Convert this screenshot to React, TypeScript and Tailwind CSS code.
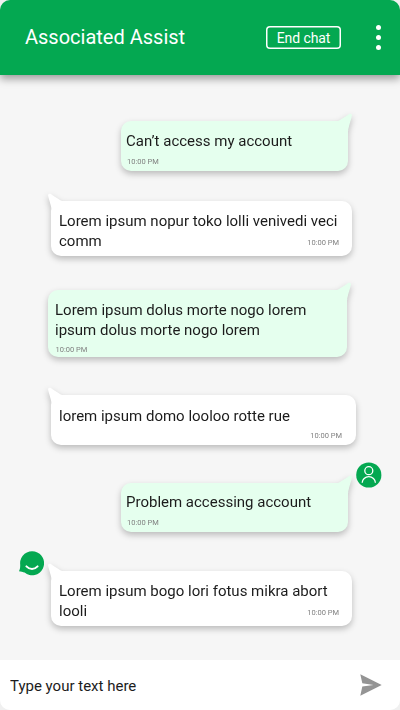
import { useState } from 'react'
import clsx from 'clsx'

type Message = {
    id: number
    from: 'user' | 'agent'
    lines: string[]
    time: string
    box: string
    text: string
    stamp: string
    avatar?: boolean
}

const messages: Message[] = [
    {
        id: 1,
        from: 'user',
        lines: ['Can’t access my account'],
        time: '10:00 PM',
        box: 'mt-[46px] ml-[121px] w-[227px] h-[50px]',
        text: 'pl-[5px] pt-[10px]',
        stamp: 'left-[6px] bottom-[4px]',
    },
    {
        id: 2,
        from: 'agent',
        lines: ['Lorem ipsum nopur toko lolli venivedi veci', 'comm'],
        time: '10:00 PM',
        box: 'mt-[30px] ml-[51px] w-[301px] h-[55px]',
        text: 'pl-2 pt-[10px]',
        stamp: 'right-[13px] bottom-[8px]',
    },
    {
        id: 3,
        from: 'user',
        lines: ['Lorem ipsum dolus morte nogo lorem', 'ipsum dolus morte nogo lorem'],
        time: '10:00 PM',
        box: 'mt-[34px] ml-[48px] w-[299px] h-[67px]',
        text: 'pl-[7px] pt-[10px]',
        stamp: 'left-[7.5px] bottom-[2px]',
    },
    {
        id: 4,
        from: 'agent',
        lines: ['lorem ipsum domo looloo rotte rue'],
        time: '10:00 PM',
        box: 'mt-[38px] ml-[51px] w-[305px] h-[50px]',
        text: 'pl-2 pt-[11px]',
        stamp: 'right-[14px] bottom-[4px]',
    },
    {
        id: 5,
        from: 'user',
        lines: ['Problem accessing account'],
        time: '10:00 PM',
        box: 'mt-[38px] ml-[121px] w-[227px] h-[49px]',
        text: 'pl-[5px] pt-[9px]',
        stamp: 'left-[6px] bottom-[4px]',
        avatar: true,
    },
    {
        id: 6,
        from: 'agent',
        lines: ['Lorem ipsum bogo lori fotus mikra abort', 'looli'],
        time: '10:00 PM',
        box: 'mt-[39px] ml-[51px] w-[301px] h-[55px]',
        text: 'pl-2 pt-[10px]',
        stamp: 'right-[13px] bottom-[8px]',
        avatar: true,
    },
]

function UserAvatar() {
    return (
        <svg viewBox="0 0 26 26" className="absolute -right-[34px] -top-[21px] size-[26px]" fill="none">
            <circle cx="12.8" cy="13" r="12.6" fill="#04a851" />
            <circle cx="12.8" cy="8.7" r="4" stroke="white" strokeWidth="1.3" />
            <path d="M6.2 20.8a6.6 6.1 0 0 1 13.2 0" stroke="white" strokeWidth="1.3" />
        </svg>
    )
}

function AgentAvatar() {
    return (
        <svg viewBox="0 0 26 26" className="absolute -left-[33px] -top-[21px] size-[26px]" fill="none">
            <path d="M2.1 13.2A12 12 0 1 1 6.6 22.6C5 22.1 3 21.4 1 21.2C2.1 19.2 2.4 16.5 2.1 13.2Z" fill="#04a851" />
            <path d="M8.4 16.4C11.6 19.8 16.4 19.8 19.6 16.4" stroke="white" strokeWidth="2" strokeLinecap="round" />
        </svg>
    )
}

// little pointer on the upper outer corner of a bubble
function Tail({ side }: { side: 'left' | 'right' }) {
    return (
        <svg
            viewBox="0 0 16 18"
            className={clsx(
                'absolute -top-[8px] w-[16px] h-[18px]',
                side === 'right' ? '-right-[4px] fill-[#e5ffee]' : '-left-[3px] -scale-x-100 fill-white'
            )}
        >
            <path d="M0 8.5C3.5 7.8 7 5 12.8 1.2C14.6 0.3 16.3 0.9 15.8 3C14.9 7 13.4 11 12.2 16.5V18H0Z" />
        </svg>
    )
}

function Bubble({ message }: { message: Message }) {
    const isUser = message.from === 'user'

    return (
        <div className={clsx('relative shrink-0', message.box)}>
            <div
                className={clsx(
                    'relative h-full rounded-[10px] drop-shadow-[0_3px_3px_rgba(0,0,0,0.24)]',
                    isUser ? 'bg-[#e5ffee]' : 'bg-white'
                )}
            >
                <Tail side={isUser ? 'right' : 'left'} />
                <div className={clsx('relative text-[15px] leading-5 whitespace-nowrap text-[#1c1c1c]', message.text)}>
                    {message.lines.map((line) => (
                        <p key={line}>{line}</p>
                    ))}
                </div>
                <span className={clsx('absolute text-[7.5px] leading-[10px] text-[#808080]', message.stamp)}>
                    {message.time}
                </span>
            </div>
            {message.avatar && (isUser ? <UserAvatar /> : <AgentAvatar />)}
        </div>
    )
}

export default function App() {
    const [draft, setDraft] = useState('')

    return (
        <div className="w-[400px] h-[710px] bg-[#f0f0f0] font-[Roboto,sans-serif]">
            <div className="flex flex-col h-full overflow-hidden rounded-[10px] bg-[#f6f6f6]">
                <header className="relative z-10 flex items-center h-[75px] shrink-0 pl-[25px] pr-[19px] bg-[#04a851] text-white shadow-[0_4px_8px_rgba(0,0,0,0.36)]">
                    <h1 className="flex-1 pb-[2px] text-[20px] leading-6">Associated Assist</h1>
                    <button className="w-[75px] h-[23px] rounded-[4px] text-[14px] leading-5 tracking-[-0.1px] shadow-[inset_0_0_0_1.5px_#fff]">
                        End chat
                    </button>
                    <button aria-label="Menu" className="flex flex-col gap-[5px] ml-[35px]">
                        <span className="size-[5px] rounded-full bg-white" />
                        <span className="size-[5px] rounded-full bg-white" />
                        <span className="size-[5px] rounded-full bg-white" />
                    </button>
                </header>

                <main className="flex flex-col flex-1 min-h-0">
                    {messages.map((message) => (
                        <Bubble key={message.id} message={message} />
                    ))}
                </main>

                <footer className="flex items-center h-[50px] shrink-0 pl-[10px] pr-[18px] bg-white">
                    <input
                        value={draft}
                        onChange={(e) => setDraft(e.target.value)}
                        placeholder="Type your text here"
                        className="flex-1 min-w-0 h-6 mt-[2px] text-[15px] outline-none text-[#1c1c1c] placeholder:text-[#1c1c1c]"
                    />
                    <button aria-label="Send">
                        <svg viewBox="0 0 22 22" className="w-[22px] h-[22px] fill-[#949494]">
                            <path d="M0.3 0.3L21.7 11L0.3 21.7L2.3 12.4L13.5 11L2.3 9.3Z" />
                        </svg>
                    </button>
                </footer>
            </div>
        </div>
    )
}
